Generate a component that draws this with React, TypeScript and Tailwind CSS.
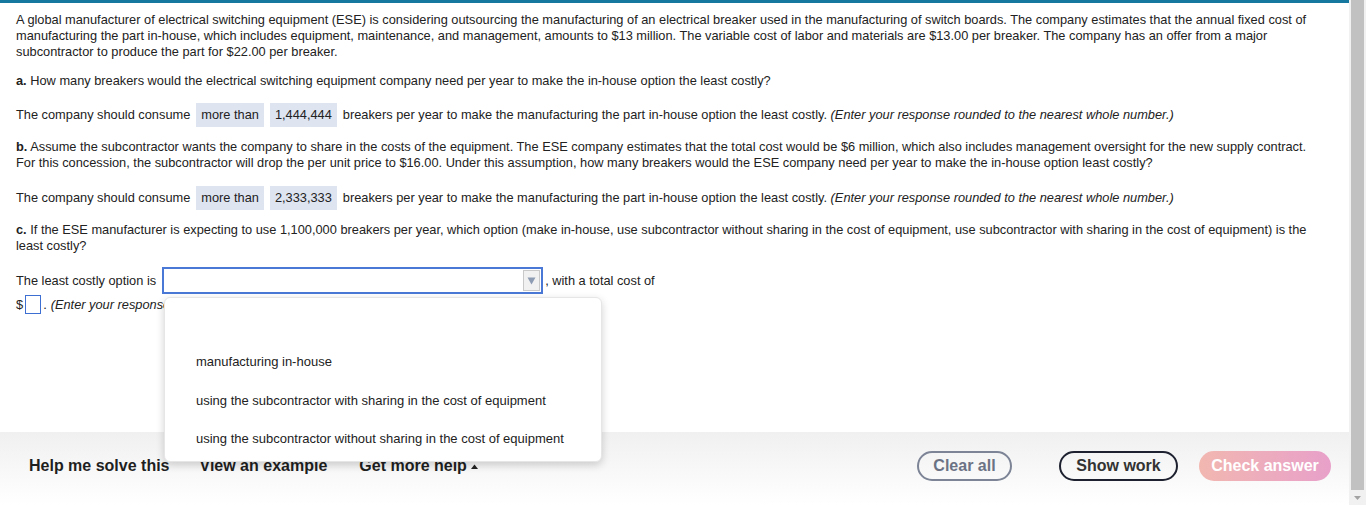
import React from "react";

const Box = ({ children }: { children: React.ReactNode }) => (
  <span className="inline-flex items-center h-6 px-[5px] bg-[#dee4f0] ml-[6px]">{children}</span>
);

export default function App() {
  return (
    <div
      className="w-[1366px] h-[505px] flex overflow-hidden bg-white text-[#222]"
      style={{ fontFamily: '"Liberation Sans", Arial, sans-serif' }}
    >
      <div className="relative flex-1 flex flex-col min-w-0">
        <div className="h-[3px] bg-[#16789f]" />
        <div className="flex-1 pl-4 pr-[14px] pt-[9px] text-[12.8px] leading-4 whitespace-nowrap">
          <p>
            A global manufacturer of electrical switching equipment (ESE) is considering outsourcing the manufacturing of an electrical breaker used in the manufacturing of switch boards. The company estimates that the annual fixed cost of
            <br />
            manufacturing the part in-house, which includes equipment, maintenance, and management, amounts to $13 million. The variable cost of labor and materials are $13.00 per breaker. The company has an offer from a major
            <br />
            subcontractor to produce the part for $22.00 per breaker.
          </p>
          <p className="mt-[13px]">
            <b>a.</b> How many breakers would the electrical switching equipment company need per year to make the in-house option the least costly?
          </p>
          <div className="mt-[14px] flex items-center h-6">
            <span>The company should consume</span>
            <Box>more than</Box>
            <Box>1,444,444</Box>
            <span className="ml-[6px]">
              breakers per year to make the manufacturing the part in-house option the least costly.{" "}
              <i>(Enter your response rounded to the nearest whole number.)</i>
            </span>
          </div>
          <p className="mt-[12px]">
            <b>b.</b> Assume the subcontractor wants the company to share in the costs of the equipment. The ESE company estimates that the total cost would be $6 million, which also includes management oversight for the new supply contract.
            <br />
            For this concession, the subcontractor will drop the per unit price to $16.00. Under this assumption, how many breakers would the ESE company need per year to make the in-house option least costly?
          </p>
          <div className="mt-[15px] flex items-center h-6">
            <span>The company should consume</span>
            <Box>more than</Box>
            <Box>2,333,333</Box>
            <span className="ml-[6px]">
              breakers per year to make the manufacturing the part in-house option the least costly.{" "}
              <i>(Enter your response rounded to the nearest whole number.)</i>
            </span>
          </div>
          <p className="mt-[12px]">
            <b>c.</b> If the ESE manufacturer is expecting to use 1,100,000 breakers per year, which option (make in-house, use subcontractor without sharing in the cost of equipment, use subcontractor with sharing in the cost of equipment) is the
            <br />
            least costly?
          </p>
          <div className="mt-[13px] flex items-center h-[27px]">
            <span>The least costly option is</span>
            <div className="ml-[6px] w-[381px] h-[27px] border-2 border-[#4a78d6] bg-white flex items-center justify-end pr-[1px]">
              <div className="w-[17px] h-[21px] bg-[#f1f1f1] border border-[#c9c9c9] flex items-center justify-center">
                <svg width="9" height="9" viewBox="0 0 9 9">
                  <path d="M0.5 1.5 L8.5 1.5 L4.5 8.5 Z" fill="#8e9cb3" />
                </svg>
              </div>
            </div>
            <span className="ml-[2px]">, with a total cost of</span>
          </div>
          <div className="mt-[1px] flex items-center h-[19px]">
            <span>$</span>
            <span className="ml-[2px] w-4 h-[19px] border border-[#3c6fd1] bg-white" />
            <span className="ml-[2px]">.</span>
            <i className="ml-[4px]">(Enter your response rounded to the nearest dollar.)</i>
          </div>
        </div>
        <div className="h-[73px] bg-gradient-to-b from-[#f0f0f0] to-white flex items-center pb-[5px] pl-[29px] pr-[18px] text-[16px] font-bold text-[#1f1f1f] whitespace-nowrap">
          <span>Help me solve this</span>
          <span className="ml-[30px]">View an example</span>
          <span className="ml-[32px] flex items-center">
            Get more help
            <svg className="ml-[4px]" width="7" height="5" viewBox="0 0 7 5">
              <path d="M0 5 L3.5 0.5 L7 5 Z" fill="#222" />
            </svg>
          </span>
          <div className="flex-1" />
          <button className="w-[95px] h-[30px] rounded-full border-2 border-[#7c8496] text-[#6b7284] font-bold text-[16px]">
            Clear all
          </button>
          <button className="ml-[47px] w-[119px] h-[30px] rounded-full border-2 border-[#1e2230] text-[#333] font-bold text-[16px]">
            Show work
          </button>
          <button className="ml-[21px] w-[132px] h-[30px] rounded-full bg-gradient-to-r from-[#f2b7b0] to-[#e8a0c9] text-white font-bold text-[16px]">
            Check answer
          </button>
        </div>
        <div className="absolute left-[164px] top-[297px] w-[438px] h-[165px] bg-white rounded-[6px] border border-[#e6e6e6] shadow-[0_3px_8px_rgba(0,0,0,0.18)] pt-[44px] text-[13px] text-[#222]">
          <div className="h-[39px] flex items-center pl-[31px]">manufacturing in-house</div>
          <div className="h-[39px] flex items-center pl-[31px]">using the subcontractor with sharing in the cost of equipment</div>
          <div className="h-[38px] flex items-center pl-[31px]">using the subcontractor without sharing in the cost of equipment</div>
        </div>
      </div>
      <div className="w-[17px] h-full bg-[#f1f1f1] flex flex-col">
        <div className="mx-[2px] h-[490px] bg-[#c1c1c1]" />
        <div className="flex-1 flex items-center justify-center">
          <svg width="7" height="4" viewBox="0 0 7 4">
            <path d="M0 0 L7 0 L3.5 4 Z" fill="#a3a3a3" />
          </svg>
        </div>
      </div>
    </div>
  );
}
